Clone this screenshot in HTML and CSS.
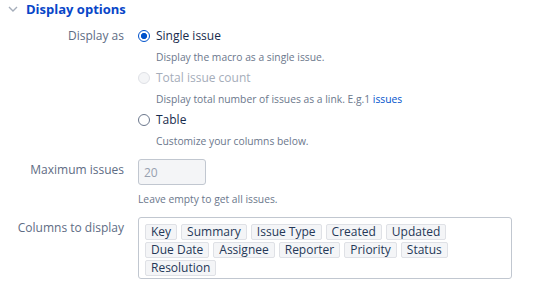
FILE: index.html
```html
<!DOCTYPE html>
<html lang="en">
<head>
    <meta charset="UTF-8">
    <title>Display options</title>
    <link rel="stylesheet" href="styles.css">
</head>
<body>
    <div class="panel">
        <h2 class="panel-title">
            <svg class="chevron" width="10" height="6" viewBox="0 0 10 6"><path d="M1 1 L5 5 L9 1" fill="none" stroke="#a5adba" stroke-width="1.4"/></svg>
            Display options
        </h2>

        <div class="field">
            <div class="label">Display as</div>
            <div class="control">
                <div class="option"><span class="radio checked"></span>Single issue</div>
                <div class="desc">Display the macro as a single issue.</div>
                <div class="option disabled"><span class="radio"></span>Total issue count</div>
                <div class="desc">Display total number of issues as a link. E.g.1 <a href="#">issues</a></div>
                <div class="option"><span class="radio"></span>Table</div>
                <div class="desc">Customize your columns below.</div>
            </div>
        </div>

        <div class="field field-max">
            <div class="label">Maximum issues</div>
            <div class="control">
                <input class="text-input" type="text" value="20" disabled>
                <div class="desc">Leave empty to get all issues.</div>
            </div>
        </div>

        <div class="field field-cols">
            <div class="label">Columns to display</div>
            <div class="control">
                <div class="tag-box">
                    <span class="tag">Key</span>
                    <span class="tag">Summary</span>
                    <span class="tag">Issue Type</span>
                    <span class="tag">Created</span>
                    <span class="tag">Updated</span>
                    <span class="tag">Due Date</span>
                    <span class="tag">Assignee</span>
                    <span class="tag">Reporter</span>
                    <span class="tag">Priority</span>
                    <span class="tag">Status</span>
                    <span class="tag">Resolution</span>
                </div>
            </div>
        </div>
    </div>
</body>
</html>
```

FILE: styles.css
```css
body {
    margin: 0;
    font-family: "Open Sans", "Noto Sans", sans-serif;
    font-size: 12px;
    color: #172b4d;
    background: #fff;
}
.panel {
    width: 512px;
}
.panel-title {
    display: flex;
    align-items: center;
    gap: 8px;
    margin: 0;
    padding: 0 0 0 8px;
    height: 18px;
    font-size: 13px;
    font-weight: 700;
    color: #0846c8;
}
.field {
    display: grid;
    grid-template-columns: 124px 1fr;
    column-gap: 14px;
}
.label {
    text-align: right;
    color: #5e6c84;
    line-height: 21px;
    padding-top: 7px;
}
.control {
    padding-top: 7px;
}
.option {
    display: flex;
    align-items: center;
    line-height: 21px;
    height: 21px;
}
.option.disabled {
    color: #a5adba;
}
.radio {
    box-sizing: border-box;
    width: 12px;
    height: 12px;
    margin: 0 6px 0 0;
    border: 1px solid #6b778c;
    border-radius: 50%;
    background: #fff;
}
.radio.checked {
    border: 1.5px solid #0052cc;
    background: radial-gradient(circle, #0052cc 0 2.8px, #fff 3.3px);
}
.option.disabled .radio {
    border-color: #dfe1e6;
    background: #f4f5f7;
}
.desc {
    padding: 1px 0 0 18px;
    height: 20px;
    font-size: 10.3px;
    line-height: 21px;
    color: #6b778c;
}
.desc a {
    color: #0052cc;
    text-decoration: none;
}
.field-max .label,
.field-max .control {
    padding-top: 8px;
}
.text-input {
    display: block;
    box-sizing: border-box;
    width: 68px;
    height: 26px;
    margin: 0;
    padding: 0 5px;
    border: 1px solid #c1c7d0;
    border-radius: 3px;
    background: #f4f5f7;
    font: inherit;
    color: #97a0af;
}
.field-max .desc {
    padding-left: 0;
    margin-top: 3px;
}
.field-cols .label,
.field-cols .control {
    padding-top: 8px;
}
.tag-box {
    display: flex;
    flex-wrap: wrap;
    align-content: flex-start;
    gap: 2px 4px;
    box-sizing: border-box;
    width: 374px;
    height: 62px;
    padding: 6px 58px 0 6px;
    border: 1px solid #c1c7d0;
    border-radius: 3px;
}
.tag {
    padding: 0 5px;
    height: 14px;
    line-height: 14px;
    border: 1px solid #dfe1e6;
    border-radius: 2px;
    background: #f4f5f7;
    color: #253858;
    font-size: 12px;
}
```
